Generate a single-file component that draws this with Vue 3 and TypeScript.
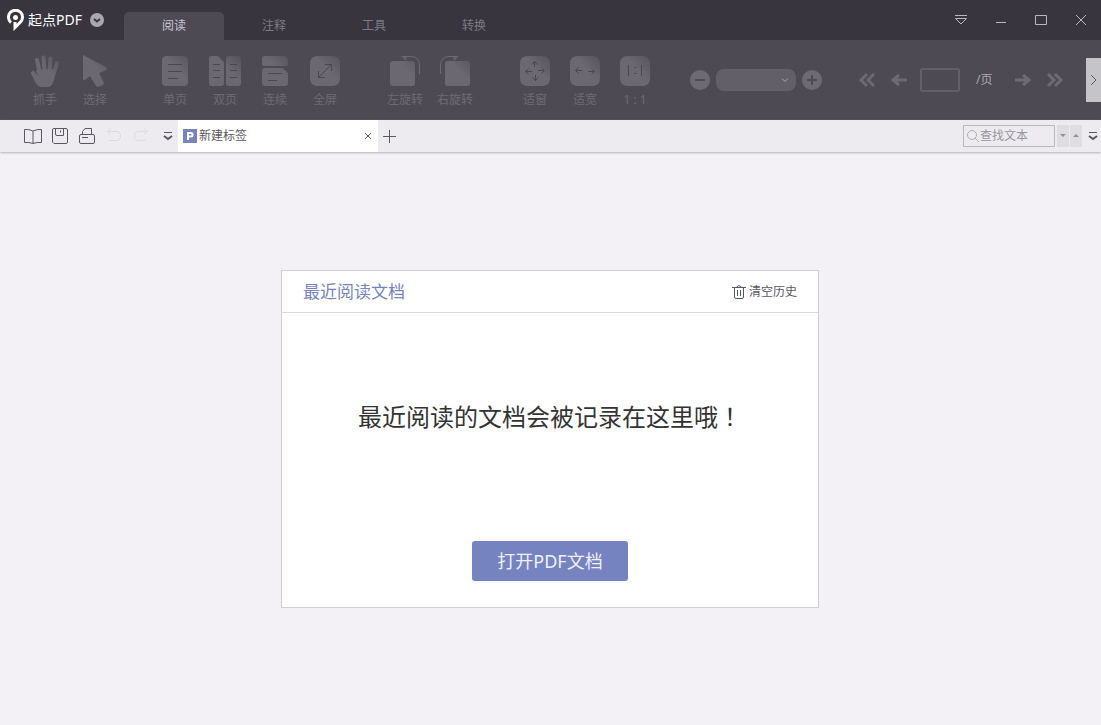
<script setup lang="ts">
import { ref } from 'vue'

interface Tool {
  label: string
  fill?: string
  edge?: string
  fingers?: string
  line?: string
}

const tabs: string[] = ['阅读', '注释', '工具', '转换']
const activeTab = ref(0)
const zoomLevel = ref('')
const pageNumber = ref('')
const query = ref('')

const roundedTile = 'M18 2H32Q40 2 40 10V24Q40 32 32 32H18Q10 32 10 24V10Q10 2 18 2Z'

const toolGroups: Tool[][] = [
  [
    {
      label: '抓手',
      fill: 'M16 16L34 15L35 20Q34 33 27 33H22Q18 33 15 28L11 19Q12 17 15 19L18 22Z',
      fingers: 'M13 19L18 25M17 6L20 19M23.5 3.5L24.5 17M30.5 4.5L29.5 17M37 9L33 22',
    },
    { label: '选择', fill: 'M13 2Q13 0 15 2L36 13Q38 15 36 16L29 19L34 29L33 31L28 33L26 32L20 22L15 26Q13 27 13 25Z' },
  ],
  [
    {
      label: '单页',
      fill: 'M17 2H33Q38 2 38 7V28Q38 32 34 32H16Q12 32 12 28V7Q12 2 17 2Z',
      line: 'M18 10.5H32M18 17.5H32M18 24.5H28',
    },
    {
      label: '双页',
      fill: 'M12 2H18L24 8V29Q24 32 21 32H12Q9 32 9 29V5Q9 2 12 2ZM29 2H37Q41 2 41 6V29Q41 32 38 32H29Q26 32 26 29V5Q26 2 29 2Z',
      line: 'M13 10.5H20M13 16.5H20M13 23.5H20M30 10.5H37M30 16.5H37M30 23.5H37',
    },
    {
      label: '连续',
      fill: 'M15 2H33Q38 2 38 7V10Q38 12 36 12H14Q12 12 12 10V5Q12 2 15 2ZM15 14H33L38 19V29Q38 32 35 32H15Q12 32 12 29V17Q12 14 15 14Z',
      line: 'M18 19.5H32M18 26.5H27',
    },
    { label: '全屏', fill: roundedTile, line: 'M18.5 23.5L31.5 10.5M25 10.5H31.5V17M18.5 17V23.5H25' },
  ],
  [
    {
      label: '左旋转',
      fill: 'M13 7H32Q35 7 35 10V29Q35 32 32 32H13Q10 32 10 29V10Q10 7 13 7ZM21 2H27L26 7Z',
      edge: 'M23 2.5H31Q39.5 2.5 39.5 12V20',
    },
    {
      label: '右旋转',
      fill: 'M18 7H37Q40 7 40 10V29Q40 32 37 32H18Q15 32 15 29V10Q15 7 18 7ZM29 2H23L24 7Z',
      edge: 'M27 2.5H19Q10.5 2.5 10.5 12V20',
    },
  ],
  [
    {
      label: '适窗',
      fill: roundedTile,
      line: 'M24.5 7.5V13M21.5 10.5L24.5 7.5L27.5 10.5M25.5 21V26.5M22.5 23.5L25.5 26.5L28.5 23.5M22 17.5H15.5M18.5 14.5L15.5 17.5L18.5 20.5M28 16.5H34.5M31.5 13.5L34.5 16.5L31.5 19.5',
    },
    {
      label: '适宽',
      fill: roundedTile,
      line: 'M22 16.5H15.5M18.5 13.5L15.5 16.5L18.5 19.5M28 17.5H34.5M31.5 14.5L34.5 17.5L31.5 20.5',
    },
    { label: '1 : 1', fill: roundedTile, line: 'M18.5 11V22M31.5 11V22M24 13.5H26M24 19.5H26' },
  ],
]
</script>

<template>
  <div class="app">
    <header class="titlebar">
      <div class="brand">
        <svg class="logo" viewBox="0 0 18 22" aria-hidden="true">
          <path d="M5 13.500A7 7 0 1 1 14 13.500L9 18.500V13" class="logo-ring" />
          <circle cx="9.500" cy="8.500" r="2.500" class="logo-fill" />
        </svg>
        <span class="name">起点PDF</span>
        <button class="brand-menu" type="button" aria-label="菜单">
          <svg viewBox="0 0 14 14"><path d="M4 6L7 8.5L10 6" /></svg>
        </button>
      </div>
      <nav class="tabs">
        <button
          v-for="(tab, i) in tabs"
          :key="tab"
          type="button"
          :class="['tab', { active: i === activeTab }]"
          @click="activeTab = i"
        >{{ tab }}</button>
      </nav>
      <div class="window-controls">
        <button type="button" aria-label="皮肤"><svg viewBox="0 0 14 12"><path d="M1 1.5H13M1.5 4.5H12.5L7 10Z" /></svg></button>
        <button type="button" aria-label="最小化"><svg viewBox="0 0 14 12"><path d="M2 8.5H12" /></svg></button>
        <button type="button" aria-label="最大化"><svg viewBox="0 0 14 12"><path d="M1.5 1.5H12.5V10.5H1.5Z" /></svg></button>
        <button type="button" aria-label="关闭"><svg viewBox="0 0 14 12"><path d="M2 1L12 11M12 1L2 11" /></svg></button>
      </div>
    </header>

    <section class="toolbar">
      <svg class="defs" width="0" height="0" aria-hidden="true">
        <defs>
          <linearGradient id="tile" gradientUnits="userSpaceOnUse" x1="40" y1="0" x2="26" y2="14">
            <stop offset="0" stop-color="#55525c" />
            <stop offset="1" stop-color="#6b6872" />
          </linearGradient>
        </defs>
      </svg>
      <div v-for="(group, g) in toolGroups" :key="g" class="tool-group">
        <button v-for="tool in group" :key="tool.label" class="tool" type="button">
          <svg viewBox="0 0 50 34" aria-hidden="true">
            <path v-if="tool.fill" :d="tool.fill" class="tile" />
            <path v-if="tool.fingers" :d="tool.fingers" class="fingers" />
            <path v-if="tool.edge" :d="tool.edge" class="edge" />
            <path v-if="tool.line" :d="tool.line" class="line" />
          </svg>
          <span>{{ tool.label }}</span>
        </button>
      </div>
      <div class="zoom">
        <button class="round" type="button" aria-label="缩小"><svg viewBox="0 0 20 20"><path d="M5 10H15" /></svg></button>
        <div class="zoom-select">
          <select v-model="zoomLevel" aria-label="缩放比例"><option value=""></option></select>
          <svg viewBox="0 0 8 6" aria-hidden="true"><path d="M1 1.5L4 4.5L7 1.5" /></svg>
        </div>
        <button class="round" type="button" aria-label="放大"><svg viewBox="0 0 20 20"><path d="M5 10H15M10 5V15" /></svg></button>
      </div>
      <div class="pager">
        <button type="button" aria-label="首页"><svg viewBox="0 0 18 16"><path d="M8 2L2 8L8 14M15 2L9 8L15 14" /></svg></button>
        <button type="button" aria-label="上一页"><svg viewBox="0 0 18 16"><path d="M8 3L2 8L8 13M3 8H16" /></svg></button>
        <label class="page">
          <input v-model="pageNumber" type="text" />
          <span>/页</span>
        </label>
        <button type="button" aria-label="下一页"><svg viewBox="0 0 18 16"><path d="M10 3L16 8L10 13M2 8H15" /></svg></button>
        <button type="button" aria-label="末页"><svg viewBox="0 0 18 16"><path d="M3 2L9 8L3 14M10 2L16 8L10 14" /></svg></button>
      </div>
      <button class="expand" type="button" aria-label="展开"><svg viewBox="0 0 8 12"><path d="M1 1L6 6L1 11" /></svg></button>
    </section>

    <section class="quickbar">
      <div class="quick">
        <button type="button" aria-label="打开"><svg viewBox="0 0 20 18"><path d="M1.5 2.5Q6 2 10 4Q14 2 18.5 2.5V15.5Q14 15 10 16.5Q6 15 1.5 15.5ZM10 4V16" /></svg></button>
        <button type="button" aria-label="保存"><svg viewBox="0 0 20 18"><path d="M4 1.5H16Q17.500 1.500 17.500 3V15Q17.500 16.500 16 16.500H4L2.500 15V3Q2.500 1.500 4 1.500ZM5.500 1.500V7Q5.500 8.500 7 8.500H13.500V1.500M10.500 3.500V5.500" /></svg></button>
        <button type="button" aria-label="打印"><svg viewBox="0 0 20 18"><path d="M5.500 7V4.500L8 1.500H14.500V7M4 7.500H16Q17.500 7.500 17.500 9V15Q17.500 16.500 16 16.500H4Q2.500 16.500 2.500 15V9Q2.500 7.500 4 7.500ZM5 10.500H11" /></svg></button>
        <button class="off" type="button" aria-label="撤销"><svg viewBox="0 0 20 18"><path d="M7 1.500L3.500 4.500L7 7.500M3.500 4.500H12Q16.500 4.500 16.500 9T12 13.500H5" /></svg></button>
        <button class="off" type="button" aria-label="重做"><svg viewBox="0 0 20 18"><path d="M13 1.500L16.500 4.500L13 7.500M16.500 4.500H8Q3.500 4.500 3.500 9T8 13.500H15" /></svg></button>
      </div>
      <button class="more" type="button" aria-label="更多"><svg viewBox="0 0 10 10"><path d="M1 1.500H9" /><path d="M1 5L5 8L9 5" class="bold" /></svg></button>
      <div class="document-tab">
        <svg class="badge" viewBox="0 0 14 14" aria-hidden="true">
          <rect width="14" height="14" />
          <path d="M5 11V4H8Q9.500 4 9.500 5.500V6Q9.500 7.500 8 7.500H5" />
        </svg>
        <span>新建标签</span>
        <button type="button" aria-label="关闭标签"><svg viewBox="0 0 8 8"><path d="M1 1L7 7M7 1L1 7" /></svg></button>
      </div>
      <button class="add" type="button" aria-label="新建标签页"><svg viewBox="0 0 13 13"><path d="M0 6.500H13M6.500 0V13" /></svg></button>
      <div class="search">
        <label class="search-box">
          <svg viewBox="0 0 14 14"><circle cx="6" cy="6" r="4.500" /><path d="M9 9L13 13" /></svg>
          <input v-model="query" type="text" placeholder="查找文本" aria-label="查找文本" />
        </label>
        <button class="step" type="button" aria-label="查找下一个"><svg viewBox="0 0 6 4"><path d="M0 0H6L3 3Z" /></svg></button>
        <button class="step" type="button" aria-label="查找上一个"><svg viewBox="0 0 6 4"><path d="M0 3H6L3 0Z" /></svg></button>
      </div>
      <button class="more end" type="button" aria-label="更多选项"><svg viewBox="0 0 10 10"><path d="M1 1.500H9" /><path d="M1 5L5 8L9 5" class="bold" /></svg></button>
    </section>

    <main class="workspace">
      <section class="recent">
        <header class="recent-head">
          <h1>最近阅读文档</h1>
          <button type="button">
            <svg viewBox="0 0 14 14" aria-hidden="true"><path d="M0 2.500H14M4.500 2Q7 -1 9.500 2M2.500 3V12Q2.500 13.500 4 13.500H10Q11.500 13.500 11.500 12V3M5.500 5V11M8.500 5V11" /></svg>
            <span>清空历史</span>
          </button>
        </header>
        <div class="recent-body">
          <p>最近阅读的文档会被记录在这里哦<span class="mark">！</span></p>
          <button type="button">打开PDF文档</button>
        </div>
      </section>
    </main>
  </div>
</template>

<style>
body {
  margin: 0;
}
</style>

<style scoped>
.app {
  display: flex;
  flex-direction: column;
  min-height: 100vh;
  background: #f3f1f5;
  color: #5a5761;
  font: 12px/16px "Noto Sans", "Noto Sans CJK SC", sans-serif;
}
.app * {
  box-sizing: border-box;
}
button,
input,
select {
  margin: 0;
  padding: 0;
  border: 0;
  background: none;
  color: inherit;
  font: inherit;
}
button {
  display: flex;
  align-items: center;
  justify-content: center;
  flex: none;
  white-space: nowrap;
}
svg {
  display: block;
  flex: none;
  fill: none;
  stroke: currentColor;
}

.titlebar {
  display: flex;
  height: 40px;
  background: #38353f;
}
.brand {
  display: flex;
  align-items: center;
  width: 124px;
  padding-left: 6px;
  color: #fff;
}
.logo {
  width: 18px;
  height: 22px;
}
.logo-ring {
  stroke-width: 3;
}
.logo-fill {
  fill: currentColor;
  stroke: none;
}
.name {
  margin-left: 4px;
  font-size: 14px;
  line-height: 20px;
}
.brand-menu {
  width: 14px;
  height: 14px;
  margin-left: 8px;
  border-radius: 50%;
  background: #aaa8ae;
  color: #38353f;
}
.brand-menu svg {
  width: 14px;
  height: 14px;
  stroke-width: 2;
}
.tabs {
  display: flex;
  align-items: flex-end;
}
.tab {
  width: 100px;
  height: 28px;
  border-radius: 5px 5px 0 0;
  color: #7d7a85;
}
.tab.active {
  background: #4d4a54;
  color: #c9c3d3;
}
.window-controls {
  display: flex;
  margin-left: auto;
  color: #b9b6c0;
}
.window-controls button {
  width: 40px;
}
.window-controls svg {
  width: 14px;
  height: 12px;
}

.toolbar {
  display: flex;
  align-items: center;
  height: 80px;
  padding-left: 20px;
  background: #4d4a54;
  color: #6d6a74;
}
.defs {
  position: absolute;
}
.tool-group {
  display: flex;
  flex: none;
  margin-right: 30px;
  padding-top: 2px;
}
.tool {
  flex-direction: column;
  gap: 4px;
  width: 50px;
}
.tool svg {
  width: 50px;
  height: 34px;
}
.tile {
  fill: url(#tile);
  stroke: none;
}
.fingers {
  stroke: url(#tile);
  stroke-width: 4;
  stroke-linecap: round;
}
.line {
  stroke: #4a4751;
}
.zoom {
  display: flex;
  align-items: center;
  gap: 6px;
}
.round {
  width: 20px;
  height: 20px;
  border-radius: 50%;
  background: #6d6a74;
  color: #4d4a54;
}
.round svg {
  width: 20px;
  height: 20px;
  stroke-width: 2;
}
.zoom-select {
  display: grid;
  align-items: center;
}
.zoom-select > * {
  grid-area: 1 / 1;
}
.zoom-select select {
  width: 80px;
  height: 22px;
  border-radius: 8px;
  background: #625f69;
  appearance: none;
}
.zoom-select svg {
  width: 8px;
  height: 6px;
  margin-right: 7px;
  justify-self: end;
  color: #aaa7b1;
  pointer-events: none;
}
.pager {
  display: flex;
  align-items: center;
  gap: 14px;
  margin-left: 37px;
}
.pager svg {
  width: 18px;
  height: 16px;
  stroke-width: 3;
}
.page {
  display: flex;
  align-items: center;
  gap: 16px;
  margin: 0 7px 0 -3px;
  color: #aaa7b1;
}
.page input {
  width: 40px;
  height: 24px;
  border: 2px solid #625f69;
  border-radius: 2px;
  text-align: center;
}
.expand {
  width: 15px;
  height: 44px;
  margin-left: auto;
  background: #c5c4c9;
  color: #5d5a64;
}
.expand svg {
  width: 8px;
  height: 12px;
}

.quickbar {
  position: relative;
  display: flex;
  align-items: center;
  height: 32px;
  background: #edebef;
  box-shadow: 0 1px 2px #b5b3b8;
}
.quick {
  display: flex;
  padding-left: 19px;
}
.quick button {
  width: 27px;
}
.quick svg {
  width: 20px;
  height: 18px;
}
.quick .off {
  color: #dddbe0;
}
.more {
  width: 20px;
  height: 24px;
  margin: 0 0 0 4px;
}
.more svg {
  width: 10px;
  height: 10px;
}
.bold {
  stroke-width: 2;
}
.document-tab {
  display: flex;
  align-items: center;
  align-self: stretch;
  width: 200px;
  padding: 0 6px 0 5px;
  background: #fff;
}
.badge {
  width: 14px;
  height: 14px;
  margin-right: 2px;
}
.badge rect {
  fill: #7683bf;
  stroke: none;
}
.badge path {
  stroke: #fff;
  stroke-width: 2;
}
.document-tab button {
  margin-left: auto;
}
.document-tab button svg {
  width: 8px;
  height: 8px;
}
.add {
  margin-left: 5px;
}
.add svg {
  width: 13px;
  height: 13px;
}
.search {
  display: flex;
  gap: 1px;
  margin-left: auto;
}
.search-box {
  display: flex;
  align-items: center;
  width: 92px;
  height: 22px;
  margin-right: 1px;
  padding-left: 2px;
  border: 1px solid #bab8bd;
  color: #b0aeb4;
}
.search-box svg {
  width: 14px;
  height: 14px;
}
.search-box input {
  width: 100%;
  min-width: 0;
  color: #4c4953;
  outline: none;
}
.search-box input::placeholder {
  color: #99969e;
  opacity: 1;
}
.step {
  width: 12px;
  height: 22px;
  background: #dfdde1;
  color: #929096;
}
.step svg {
  width: 6px;
  height: 4px;
  fill: currentColor;
  stroke: none;
}
.more.end {
  width: 10px;
  margin: 0 3px 0 6px;
}

.workspace {
  display: flex;
  flex: 1;
  align-items: center;
  justify-content: center;
  padding: 20px 21px 20px 20px;
}
.recent {
  width: 100%;
  max-width: 538px;
  border: 1px solid #cfced3;
  background: #fff;
}
.recent-head {
  display: flex;
  align-items: center;
  justify-content: space-between;
  height: 42px;
  padding: 2px 21px 0 21px;
  border-bottom: 1px solid #dad9dd;
}
h1 {
  margin: 0;
  color: #7683bf;
  font-size: 17px;
  font-weight: 400;
  line-height: 24px;
}
.recent-head button {
  gap: 3px;
}
.recent-head svg {
  width: 14px;
  height: 14px;
}
.recent-body {
  display: flex;
  flex-direction: column;
  align-items: center;
  padding: 85px 20px 26px;
}
p {
  margin: 0 0 106px;
  color: #333;
  font-size: 24px;
  line-height: 36px;
}
.mark {
  font-family: "Noto Sans CJK TC", sans-serif;
}
.recent-body button {
  width: 156px;
  height: 40px;
  border-radius: 3px;
  background: #7683c1;
  color: #f0f0fa;
  font-size: 18px;
}
</style>
